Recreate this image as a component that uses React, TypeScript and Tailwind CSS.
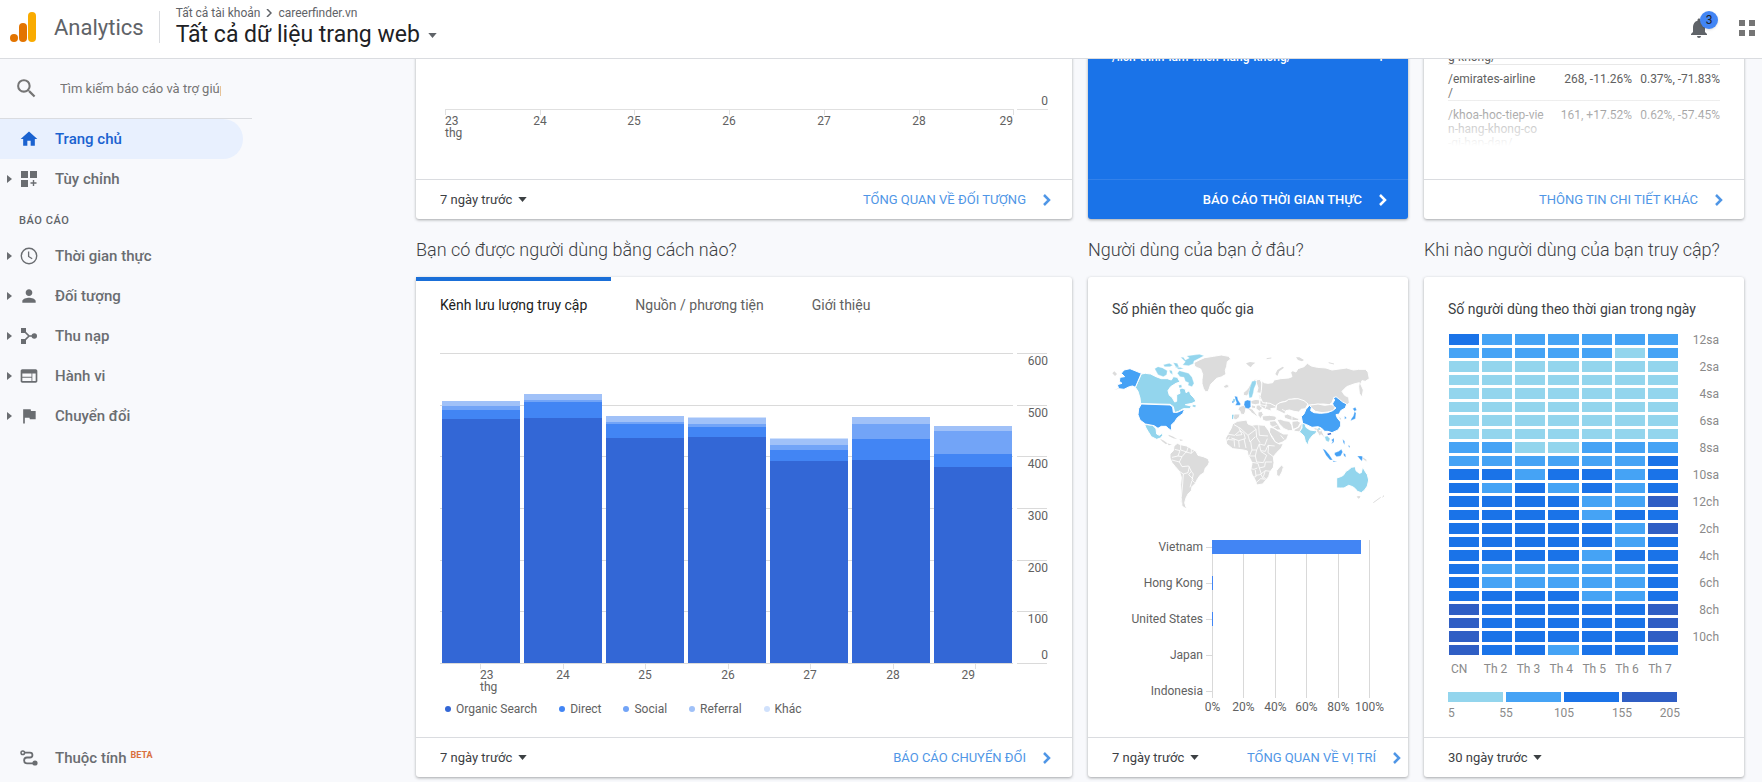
import type { ReactNode } from 'react';
import { MdFlag, MdHome, MdNotifications, MdPerson, MdSearch, MdWeb } from 'react-icons/md';

interface NavItemType {
    label: string;
    icon: ReactNode;
    expandable?: boolean;
    active?: boolean;
    beta?: boolean;
}

interface FooterProps {
    range?: string;
    link?: string;
    inverted?: boolean;
    tight?: boolean;
}

const CustomizeIcon = () => (
    <svg viewBox="0 0 16 16" className="size-4" fill="currentColor">
        <path d="M0 0h7v7H0zM9 0h7v7H9zM0 9h7v7H0zM11.8 9h1.4v2.300h2.300v1.400h-2.300V15h-1.400v-2.300H9.500v-1.400h2.300z" />
    </svg>
);

const ClockIcon = () => (
    <svg viewBox="0 0 18 18" className="size-[18px]" fill="none" stroke="currentColor">
        <circle cx="9" cy="9" r="7.700" strokeWidth="1.400" />
        <path d="M8.600 4.500v5l3.600 2.200" strokeWidth="1.300" />
    </svg>
);

const AcquisitionIcon = () => (
    <svg viewBox="0 0 16 16" className="size-4" fill="currentColor">
        <path d="M0 0h5v5H0zM0 11h5v5H0z" />
        <circle cx="13.300" cy="8" r="2.700" />
        <path d="M2.500 2.500 8 8l-5.500 5.500M8 8h5" fill="none" stroke="currentColor" strokeWidth="1.700" />
    </svg>
);

const AttributionIcon = () => (
    <svg viewBox="0 0 18 16" className="h-4 w-[18px]" fill="none" stroke="currentColor">
        <circle cx="2.800" cy="2.800" r="1.800" strokeWidth="1.500" />
        <path
            d="M4.500 2.600H10a2.400 2.400 0 0 1 0 4.900H7a2.900 2.900 0 0 0 0 5.800h6"
            strokeWidth="1.800"
        />
        <circle cx="15" cy="13" r="2.600" fill="currentColor" stroke="none" />
    </svg>
);

const Caret = () => (
    <svg viewBox="0 0 10 6" className="h-[5px] w-[9px] shrink-0" fill="currentColor">
        <path d="M0 0h10L5 6z" />
    </svg>
);

const reports: NavItemType[] = [
    { label: 'Thời gian thực', icon: <ClockIcon />, expandable: true },
    { label: 'Đối tượng', icon: <MdPerson className="size-5" />, expandable: true },
    { label: 'Thu nạp', icon: <AcquisitionIcon />, expandable: true },
    { label: 'Hành vi', icon: <MdWeb className="size-5" />, expandable: true },
    { label: 'Chuyển đổi', icon: <MdFlag className="size-5" />, expandable: true }
];

const NavItem = ({ label, icon, expandable, active, beta }: NavItemType) => (
    <a
        href="#"
        className={
            active
                ? 'mr-[9px] flex h-10 items-center rounded-r-full bg-[#e8f0fe] pl-[7px] text-[15px] font-medium text-[#1a62d0]'
                : 'mr-[9px] flex h-10 items-center pl-[7px] text-[15px] font-medium text-[#6a6d71]'
        }
    >
        <span className="w-3">
            {expandable && (
                <svg viewBox="0 0 5 8" className="h-2 w-[5px]" fill="currentColor">
                    <path d="M0 0v8l5-4z" />
                </svg>
            )}
        </span>
        <span className="flex w-5 justify-center">{icon}</span>
        <span className="pl-4">
            {label}
            {beta && <sup className="ml-1 text-[9px] font-bold text-[#d9703e]">BETA</sup>}
        </span>
    </a>
);

const CardFooter = ({ range, link, inverted, tight }: FooterProps) => (
    <div
        className={
            inverted
                ? 'flex h-10 items-center justify-between border-t border-[#3381ea] pr-5 pl-6 text-white'
                : tight
                  ? 'flex h-10 items-center justify-between border-t border-[#dadce0] pr-[6px] pl-6'
                  : 'flex h-10 items-center justify-between border-t border-[#dadce0] pr-5 pl-6'
        }
    >
        {range ? (
            <div className="relative flex items-center text-[#3c4043]">
                <select
                    aria-label="Khoảng thời gian"
                    className="appearance-none bg-transparent pr-[14px] text-[13px]"
                >
                    <option>{range}</option>
                </select>
                <span className="pointer-events-none absolute right-0">
                    <Caret />
                </span>
            </div>
        ) : (
            <span />
        )}
        {link && (
            <a
                href="#"
                className={
                    inverted
                        ? 'flex items-center gap-4 text-[13px] font-medium'
                        : 'flex items-center gap-4 text-[13px] text-[#4f96e6]'
                }
            >
                {link}
                <svg
                    viewBox="0 0 10 12"
                    className="h-3 w-[10px]"
                    fill="none"
                    stroke="currentColor"
                    strokeWidth="2.500"
                >
                    <path d="M2 1l5 5-5 5" />
                </svg>
            </a>
        )}
    </div>
);

const days = ['23', '24', '25', '26', '27', '28', '29'];

const DayLabels = ({ start, pitch, top }: { start: number; pitch: number; top: number }) => (
    <g>
        {days.map((day, i) => (
            <g key={day}>
                <path
                    d={`M${start + Math.round(i * pitch) + 0.5} ${top}v5`}
                    stroke="#e0e0e0"
                />
                <text
                    x={start + Math.round(i * pitch)}
                    y={top + 15}
                    textAnchor={i === 0 ? 'start' : i === 6 ? 'end' : 'middle'}
                >
                    {day}
                </text>
            </g>
        ))}
        <text x={start} y={top + 27}>
            thg
        </text>
    </g>
);

const UsersChart = () => (
    <svg viewBox="0 0 608 140" className="w-full fill-[#616161] font-[Roboto] text-[12px]">
        <path d="M5 70.5h569M577 70.5h31" stroke="#e0e0e0" />
        <text x="608" y="66" textAnchor="end">
            0
        </text>
        <DayLabels start={5} pitch={94.7} top={71} />
    </svg>
);

const channels = [
    { label: 'Organic Search', color: '#3367d6', dot: 'bg-[#3367d6]' },
    { label: 'Direct', color: '#4285f4', dot: 'bg-[#4285f4]' },
    { label: 'Social', color: '#72a4f7', dot: 'bg-[#72a4f7]' },
    { label: 'Referral', color: '#a0c1f8', dot: 'bg-[#a0c1f8]' },
    { label: 'Khác', color: '#d0e1fc', dot: 'bg-[#d0e1fc]' }
];

// stacked from the bottom, in chart units
const traffic = [
    [244, 9, 4, 5, 0],
    [245, 16, 2, 6, 0],
    [225, 14, 2, 6, 0],
    [226, 10, 3, 6, 1],
    [202, 11, 5, 6, 1],
    [203, 21, 15, 7, 0],
    [196, 13, 23, 5, 0]
];

const TrafficChart = () => (
    <svg viewBox="0 0 608 346" className="w-full fill-[#616161] font-[Roboto] text-[12px]">
        {[0, 1, 2, 3, 4, 5, 6].map((step) => {
            const y = 310 - Math.round(step * 51.67);
            return (
                <g key={step}>
                    <path d={`M0 ${y + 0.5}h573M577 ${y + 0.5}h30`} stroke="#dadada" />
                    <text x="608" y={step === 0 ? y - 4 : y + 12} textAnchor="end">
                        {step * 100}
                    </text>
                </g>
            );
        })}
        {traffic.map((stack, i) => {
            let top = 310;
            return (
                <g key={i} shapeRendering="crispEdges">
                    {stack.map((value, j) => {
                        top -= value;
                        return (
                            <rect
                                key={j}
                                x={2 + i * 82}
                                y={top}
                                width="78"
                                height={value}
                                fill={channels[j].color}
                            />
                        );
                    })}
                </g>
            );
        })}
        <DayLabels start={40} pitch={82.5} top={311} />
    </svg>
);

const WorldMap = () => (
    <svg viewBox="96 240 816 490" className="w-full" stroke="#fff" strokeWidth="3" strokeLinejoin="round">
        <g fill="#dcdcdc">
            {/* Greenland, Iceland and the northern islands */}
            <path d="M342 278l16-8 16-7 26-4 24-4 22 4 6 8-10 8-2 14-4 12 2 12-14 8-14 4-10 10-8 8-4 12-4 10-8 0-6-10-4-14 0-12 2-16-6-16-10-4-8-4z" />
            <path d="M430 348l10-5 8 4-4 6-10 2z" />
            <path d="M498 280l12-4 16 2-8 6-6 8-8-6zM648 262l10 0 14 8-6 4-12-4zM586 312l6-12 16-10 4 3-14 11-6 14z" stroke="none" />
            <path d="M560 266l14-2M746 278l16 4" stroke="#dcdcdc" />
            <path d="M97 310l6-6 8 8-6 6zM102 360l14-4 10-6" stroke="none" />
            {/* Central America and the Caribbean */}
            <path d="M240 506l12 6 10 8-4 3-12-9zM262 520l14 4-10 2zM266 494l14 6 12 8-12-3-14-7zM298 508l12 2-8 3z" stroke="none" />
            {/* South America */}
            <path d="M282 528L292 520 302 524 320 528 334 536 348 544 354 556 370 560 384 566 388 576 384 586 376 594 372 608 360 616 352 628 346 640 336 650 334 662 324 672 318 684 314 698 320 718 306 708 301 690 303 668 302 644 304 622 298 604 286 590 276 578 270 564 270 552 280 542z" />
            {/* Western and southern Europe */}
            <path d="M478 410l12-4 8 8-2 12-4 8-10-2-2-8-6-6zM462 432l18 0-2 10-10 8-8-4z" />
            <path d="M500 416l10-2 8 4 12 16 4 10-8-8-12-8-4-6zM490 368l12-10 8-14 14-16 10-2-8 10-12 12-6 18-6 12-12-2zM526 330l14-2 8 16 4 18-10 8-12-2 4-14z" />
            <path d="M512 392l16-4 12 2-2 12-12 2-12-2zM514 404l14 4-2 8-12-2zM528 406l14-2 6 10-10 10-10-8zM534 426l12-2 4 10-8 12-8-10zM536 374l12 2 2 14-12-2z" />
            <path d="M540 390l22 4 20 4 10 4-4 12-16 2 4 8-12-4-12-4-12-8z" />
            <path d="M546 438l22-2 16 2 6 6-6 8-26 2-10-4z" />
            {/* Russia */}
            <path d="M546 332L552 338 564 340 578 338 582 330 602 326 626 324 636 320 632 308 638 302 648 306 654 296 672 290 682 280 694 288 712 292 738 294 756 300 800 294 820 300 836 298 856 298 864 306 868 326 856 334 846 332 842 342 850 360 846 382 838 370 836 350 838 338 822 342 800 350 786 364 794 376 806 382 808 398 798 408 776 390 762 382 756 398 748 404 728 402 700 404 686 406 664 392 644 386 624 392 600 398 590 410 570 400 548 398 540 380 544 362z" />
            {/* Central Asia and the Middle East */}
            <path d="M590 404l10-6 18-4 8-6 28-2 18 6 12 10-8 14-12 2-8 8-14-2-14-4-10 2-4 10-12-6-14-6z" />
            <path d="M686 406l14-2 14-2 20 4 14-2 8 0 12 4-8 14-16 4-18 2-20-4z" />
            <path d="M612 436l10-4 14 6 14 6 10 2-8 6-14 0-14-4-10-4zM590 448l12 0 12 4 14 2 8 12 2 16-12 0-14-6-14-14zM636 454l16-2 10 6-8 14-14 8-4-14zM640 478l16-6 8-12 6 2-6 14-4 10-16-2z" />
            <path d="M568 454l18-2 10 14 8 14-12 0-14-8-8-8zM570 472l10 2 16 10 14 8 16 0-6 16-12 8-16 6-6-4-8-16-10-14z" />
            {/* South East Asia and the Pacific */}
            <path d="M700 472l16 4 4 8 4-6 6 14 6 16-6-8-6-6-6 4-6-12-10-10zM776 438l8 6 0 8-6-4zM734 544l6 10M848 560l12 8 2 9-8-5-8-6z" />
            <path d="M880 698l22-16M908 682l6-8M832 680l8 0-4 5z" stroke="#dcdcdc" strokeWidth="3" />
            {/* Africa */}
            <path d="M458 462L472 454 500 450 504 462 514 466 528 464 554 466 566 482 576 502 586 516 598 522 610 520 604 534 590 548 580 560 582 578 580 592 570 606 566 620 558 630 548 642 530 645 526 631 516 613 512 599 516 581 512 569 504 555 502 543 490 540 474 538 458 536 440 522 437 504 446 488 454 474z" />
            <path d="M606 584l4 8-4 14-8 14-8-4 0-14 6-8z" />
        </g>
        {/* country borders */}
        <g fill="none" strokeWidth="2.500">
            <path d="M462 464l14 8 10 22-18 2M440 492l24 4 16-14 12 8M478 472l26 24 24-18-16-16M492 490l4 16-20 6-22-8M504 496l6 20M528 478l2 24 10 16M536 466l2 30 26 2M510 516l16-16M492 506l6 28M476 512l2 20M462 506l2 24M440 508l20 2M512 514l4 26 14 0 8-18 16 4 8-20M538 522l4 20 14 2 8-18 20 2M566 526l-2 22 16 12M516 540l-8 18 18 0 4-18M526 558l4 18 20 2 10-22-18-12M510 576l24 4 4 14 16-4 2-14 20 0M532 594l-10 4-12-2M538 594l6 18M526 600l2 20-10 2M528 616l12-2 16-12 16 2M556 602l-6 18 8 8M542 612l8 14M448 500l-8 14M526 640l16-14 14 2" />
            <path d="M302 524l0 16 18 6 4-14M284 538l16 4-6 16-18 4M294 558l12 2 12-14 16 4 8-8M306 560l-8 16-22-6M298 576l8 14 20-2 8 16 6 8-4 18 8 8M298 604l12 8 14-4 4-18M310 612l-2 30-4 40 2 22M334 604l-8 10 14 14M336 632l-6 20M334 532l0 18" />
            <path d="M606 418l14 8 16-2 8 8 12-4M620 426l-10 12M636 438l0 16M560 396l-4 18M540 404l22 4M576 472l16-6M602 496l10 12" />
        </g>
        <g fill="#93d5ed">
            {/* Canada with its islands */}
            <path d="M184 312L196 310 212 312 228 320 244 326 262 326 274 330 280 320 292 322 300 336 288 340 272 350 264 362 268 376 276 382 284 396 290 394 290 374 300 370 298 358 306 354 316 358 318 368 328 362 332 374 342 384 348 394 336 400 316 404 334 408 330 416 310 416 296 424 284 428 280 410 270 403 182 401 180 384 174 364 166 352z" />
            <path d="M224 296l10-6 14 4 14 8-2 12-10 6-16-6zM250 284l18-4 10 6-8 4-16 0zM280 278l12 2 6 14-10-2zM302 262l8 0 6 8 12-6-8-6 14-2 24-3 14 4-14 8-16 8-2 8-14 6-18-2 8-10zM268 300l8 2 2 12-8-6zM298 302l14 4 14 4 10 12 6 18-6 10-12-4 2-8-10-4-4-12-12-2-8-10zM284 290l16 2 12 4-16 2zM296 346l8-2 2 8-8 2zM338 404l10 2-2 6-8-2z" strokeWidth="1" />
            <path d="M194 464l8 0 16 2 10 10 2 16 8 4 8-6 2 6-6 8-12 4-16-8-10-16-6-10z" />
            <path d="M516 334l12-2 0 10-6 14-2 12-4 14-8 2-2-14 4-18z" strokeWidth="1" />
            <path d="M456 434l5 0-2 14-3-2zM460 386l6 2-2 8-6 0z" stroke="none" />
            {/* India */}
            <path d="M666 462l8-4 4 14 12 8 14 2 6-2-2 10-10 6-8 10-4 8-2 12-8-12-4-16-8-8-6-4 8-12z" />
            {/* Thailand */}
            <path d="M734 500l8-2 8 8-4 10-8-4zM712 478l6-6 4 8" strokeWidth="1" />
            {/* Australia */}
            <path d="M770 624l12-4 8-4 8-12 10-6 6-6 12-2 2 12 10 8 6-2 4-18 6 12 8 12 4 16-4 18-8 12-10 8-12-4-6-8-8-6-12-4-14 8-10 0-12 0z" />
        </g>
        <g fill="#45a1f5">
            {/* United States */}
            <path d="M132 300L150 296 184 310 166 352 158 348 148 350 132 358 116 356 112 344 126 340 118 334 120 322 134 320 124 310z" />
            <path d="M184 402L270 405 278 411 280 427 292 427 314 417 308 431 292 443 284 455 274 465 275 482 266 476 258 469 244 469 234 475 222 467 196 462 180 450 174 434 176 416z" />
            {/* Germany, United Kingdom */}
            <path d="M494 394l8-4 10 2 0 18-6 6-10-2-4-10z" strokeWidth="1" />
            <path d="M464 378l8 2 2 10 8 12-2 4-14 0 4-8-4-10zM457 392l5 2-2 6-4-2z" strokeWidth="1" />
            {/* China */}
            <path d="M664 440l8-8 6-14 10-12 6 6-2 10 10 6 20 2 20-2 16-6 10-8-8-6-2-8 6-10-4-6 8-4 10 8 10 8 12 6-4 12-14 8-4 10-10 2 4 10 10 12 0 12-8 12-18 8-12-4-10 0-10-10-10-4-18 2-16-8-12-4-2-10z" />
            {/* Japan, Korea, Taiwan */}
            <path d="M818 416l8-4 4 8-6 4zM824 424l4 6-2 16-14 6 2-6 6-8zM794 438l6 6-6 4z" strokeWidth="1" />
            {/* Indonesia, Philippines */}
            <path d="M728 536l8 4 12 14 10 16-8 0-12-14zM764 548l12-4 8-6 4 8-6 12-12 2-6-6zM832 558l12 0 4 2-2 14-6-6zM758 572l14 2-12 2zM790 550l6 2 2 10-6-4zM788 508l6 6 0 10-4-6zM804 526l6 2-2 6zM754 510l8-6 0 12-8 6 4-8z" strokeWidth="1" />
        </g>
        <path d="M742 491l10-2 2 4-10 2zM752 496l8 8" fill="#2f5ec4" stroke="none" />
    </svg>
);

const countries = [
    { label: 'Vietnam', width: 149 },
    { label: 'Hong Kong', width: 1 },
    { label: 'United States', width: 1 },
    { label: 'Japan', width: 0 },
    { label: 'Indonesia', width: 0 }
];

const CountryChart = () => (
    <svg viewBox="0 0 272 178" className="w-full fill-[#616161] font-[Roboto] text-[12px]">
        {[0, 20, 40, 60, 80, 100].map((percent) => (
            <g key={percent}>
                <path
                    d={`M${100.5 + Math.round(percent * 1.57)} 0v158`}
                    stroke="#d9d9d9"
                />
                <text x={100.5 + Math.round(percent * 1.57)} y="171" textAnchor="middle">
                    {percent}%
                </text>
            </g>
        ))}
        {countries.map(({ label, width }, i) => (
            <g key={label}>
                <path d={`M94 ${7.5 + i * 36}h6`} stroke="#d9d9d9" />
                <rect x="100" y={i * 36} width={width} height="14" fill="#4285f4" />
                <text x="91" y={11 + i * 36} textAnchor="end">
                    {label}
                </text>
            </g>
        ))}
    </svg>
);

const levels = ['bg-[#93d5ed]', 'bg-[#45a3f5]', 'bg-[#1a73e8]', 'bg-[#2f5ec4]'];

// one row for each hour, one digit for each day of the week
const hours = [
    '2111111',
    '1111101',
    '0000000',
    '0000000',
    '0000000',
    '0000000',
    '0000000',
    '0000000',
    '1100111',
    '1111112',
    '2212212',
    '2121212',
    '2222113',
    '2222122',
    '2222213',
    '2222212',
    '2222122',
    '2111112',
    '2111112',
    '2222112',
    '3222223',
    '3222223',
    '3222223',
    '3221222'
];

const hourLabels = [
    '12sa', '2sa', '4sa', '6sa', '8sa', '10sa',
    '12ch', '2ch', '4ch', '6ch', '8ch', '10ch'
];

const HeatMap = () => (
    <div className="text-xs text-[#8a8a8a]">
        <div className="flex justify-between">
            <div className="flex w-[230px] flex-col gap-[3px] pl-px">
                {hours.map((row, i) => (
                    <div key={i} className="grid grid-cols-7 gap-[3px]">
                        {row.split('').map((level, j) => (
                            <div
                                key={j}
                                className={`${i % 2 === 0 ? 'h-[11px]' : 'h-[10px]'} ${levels[Number(level)]}`}
                            />
                        ))}
                    </div>
                ))}
            </div>
            <ul className="h-[320px] text-right">
                {hourLabels.map((label) => (
                    <li key={label} className="h-[27px] leading-3">
                        {label}
                    </li>
                ))}
            </ul>
        </div>
        <div className="mt-[6px] grid w-[233px] grid-cols-7 pl-[3px]">
            {['CN', 'Th 2', 'Th 3', 'Th 4', 'Th 5', 'Th 6', 'Th 7'].map((day) => (
                <span key={day}>{day}</span>
            ))}
        </div>
        <div className="mt-[15px] grid w-[229px] grid-cols-4 gap-[3px]">
            {levels.map((level) => (
                <div key={level} className={`h-[10px] ${level}`} />
            ))}
        </div>
        <div className="mt-[3px] flex w-[232px]">
            <span className="w-[29px]">5</span>
            <span className="w-[58px] text-center">55</span>
            <span className="w-[58px] text-center">105</span>
            <span className="w-[58px] text-center">155</span>
            <span className="flex-1 text-right">205</span>
        </div>
    </div>
);

const pages = [
    { path: '/khoa-hoc-tiep-vien-hang-khong/', lines: ['g-khong/'], views: '', rate: '' },
    { path: '/emirates-airline/', lines: ['/emirates-airline', '/'], views: '268, -11.26%', rate: '0.37%, -71.83%' },
    {
        path: '/khoa-hoc-tiep-vien-hang-khong-co-gi/',
        lines: ['/khoa-hoc-tiep-vie', 'n-hang-khong-co', '-gi-hap-dan/'],
        views: '161, +17.52%',
        rate: '0.62%, -57.45%'
    }
];

const card = 'flex flex-col rounded-[3px] bg-white shadow-[0_1px_3px_rgba(60,64,67,0.45)]';

const SectionTitle = ({ children, wide }: { children: ReactNode; wide?: boolean }) => (
    <h2
        className={
            wide
                ? 'col-span-2 flex h-[58px] items-center pt-1 text-lg font-light whitespace-nowrap text-[#3c4043]'
                : 'flex h-[58px] items-center pt-1 text-lg font-light whitespace-nowrap text-[#3c4043]'
        }
    >
        {children}
    </h2>
);

const Header = () => (
    <header className="z-10 flex h-[59px] shrink-0 items-start border-b border-[#dadce0] bg-white">
        <svg viewBox="0 0 26 30" className="mt-3 ml-[10px] h-[30px] w-[26px]">
            <rect x="18" width="8" height="30" rx="4" fill="#f9ab00" />
            <rect x="9" y="11" width="8" height="19" rx="4" fill="#e37400" />
            <circle cx="4" cy="26" r="4" fill="#e37400" />
        </svg>
        <span className="mt-3 ml-[18px] text-[22px] leading-8 text-[#5f6368]">Analytics</span>
        <div className="mt-[11px] ml-[15px] h-8 w-px bg-[#dadce0]" />
        <div className="ml-4">
            <nav className="mt-1 flex items-center gap-[6px] text-xs leading-[18px] text-[#5f6368]">
                <a href="#">Tất cả tài khoản</a>
                <svg viewBox="0 0 6 8" className="h-2 w-[6px]" fill="none" stroke="currentColor" strokeWidth="1.500">
                    <path d="M1 0l4 4-4 4" />
                </svg>
                <a href="#">careerfinder.vn</a>
            </nav>
            <button type="button" className="flex items-center gap-2 text-[23px] leading-[26px] text-[#202124]">
                Tất cả dữ liệu trang web
                <span className="text-[#5f6368]">
                    <Caret />
                </span>
            </button>
        </div>
        <div className="mt-4 mr-[7px] ml-auto flex items-center gap-7">
            <button type="button" aria-label="Thông báo" className="relative text-[#5f6368]">
                <MdNotifications className="size-6" />
                <span className="absolute -top-[5px] -right-[7px] flex size-[18px] items-center justify-center rounded-full bg-[#4285f4] text-xs text-[#202124] shadow">
                    3
                </span>
            </button>
            <button type="button" aria-label="Ứng dụng" className="text-[#757575]">
                <svg viewBox="0 0 16 16" className="size-4" fill="currentColor">
                    <path d="M0 0h6v6H0zM10 0h6v6h-6zM0 10h6v6H0zM10 10h6v6h-6z" />
                </svg>
            </button>
        </div>
    </header>
);

const Sidebar = () => (
    <aside className="flex w-[252px] shrink-0 flex-col">
        <label className="flex h-[60px] shrink-0 items-center border-b border-[#dadce0] pl-[14px] text-[#757575]">
            <MdSearch className="size-[25px]" />
            <input
                type="text"
                placeholder="Tìm kiếm báo cáo và trợ giúp"
                className="ml-[21px] w-[161px] bg-transparent text-[13px] outline-none placeholder:text-[#757575]"
            />
        </label>
        <nav className="flex flex-1 flex-col">
            <NavItem label="Trang chủ" icon={<MdHome className="size-5" />} active />
            <NavItem label="Tùy chỉnh" icon={<CustomizeIcon />} expandable />
            <h3 className="flex h-[37px] items-center pt-2 pl-[19px] text-[11px] font-medium tracking-wider text-[#5f6368]">
                BÁO CÁO
            </h3>
            {reports.map((item) => (
                <NavItem key={item.label} {...item} />
            ))}
            <div className="mt-auto mb-1">
                <NavItem label="Thuộc tính" icon={<AttributionIcon />} beta />
            </div>
        </nav>
    </aside>
);

const App = () => {
    return (
        <div className="flex h-screen flex-col overflow-hidden bg-[#f8f9fc] font-[Roboto,sans-serif] text-[#3c4043]">
            <Header />
            <div className="flex min-h-0 flex-1">
                <Sidebar />
                <main className="min-w-0 flex-1 overflow-hidden pr-[18px] pl-[164px]">
                    <div className="-mt-5 grid grid-cols-4 gap-x-4">
                        <section className={`${card} col-span-2`}>
                            <div className="h-[140px] px-6">
                                <UsersChart />
                            </div>
                            <CardFooter range="7 ngày trước" link="TỔNG QUAN VỀ ĐỐI TƯỢNG" />
                        </section>
                        <section className="flex flex-col rounded-[3px] bg-[#1a73e8] shadow-[0_1px_3px_rgba(60,64,67,0.45)]">
                            <div className="flex h-[140px] justify-between px-6 pt-[11px] text-xs leading-[14px] font-medium text-white">
                                <span>/lich-trinh-lam-...ien-hang-khong/</span>
                                <span>1</span>
                            </div>
                            <CardFooter link="BÁO CÁO THỜI GIAN THỰC" inverted />
                        </section>
                        <section className={card}>
                            <div className="relative h-[140px] overflow-hidden px-6 pt-[11px]">
                                <table className="w-full text-xs leading-[14px] text-[#616161]">
                                    <tbody>
                                        {pages.map(({ path, lines, views, rate }) => (
                                            <tr key={path} className="border-b border-[#e8e8e8] align-top last:border-b-0">
                                                <td className={lines.length > 1 ? 'pt-[7px]' : ''}>
                                                    {lines.map((line) => (
                                                        <div key={line}>{line}</div>
                                                    ))}
                                                </td>
                                                <td className={lines.length > 1 ? 'pt-[7px] text-right' : ''}>{views}</td>
                                                <td className={lines.length > 1 ? 'pt-[7px] text-right' : ''}>{rate}</td>
                                            </tr>
                                        ))}
                                    </tbody>
                                </table>
                                <div className="absolute inset-x-0 bottom-0 h-[94px] bg-linear-to-b from-white/0 to-white to-65%" />
                            </div>
                            <CardFooter link="THÔNG TIN CHI TIẾT KHÁC" />
                        </section>

                        <SectionTitle wide>Bạn có được người dùng bằng cách nào?</SectionTitle>
                        <SectionTitle>Người dùng của bạn ở đâu?</SectionTitle>
                        <SectionTitle>Khi nào người dùng của bạn truy cập?</SectionTitle>

                        <section className={`${card} col-span-2`}>
                            <div className="flex text-sm text-[#616161]">
                                <button type="button" className="h-[52px] border-t-4 border-[#1a6fd8] px-6 text-[#212121]">
                                    Kênh lưu lượng truy cập
                                </button>
                                <button type="button" className="h-[52px] border-t-4 border-transparent px-6">
                                    Nguồn / phương tiện
                                </button>
                                <button type="button" className="h-[52px] border-t-4 border-transparent px-6">
                                    Giới thiệu
                                </button>
                            </div>
                            <div className="flex-1 px-6 pt-6">
                                <TrafficChart />
                                <ul className="mt-[2px] flex gap-[22px] pl-[5px] text-xs text-[#616161]">
                                    {channels.map(({ label, dot }) => (
                                        <li key={label} className="flex items-center gap-[5px]">
                                            <span className={`size-[6px] rounded-full ${dot}`} />
                                            {label}
                                        </li>
                                    ))}
                                </ul>
                            </div>
                            <CardFooter range="7 ngày trước" link="BÁO CÁO CHUYỂN ĐỔI" />
                        </section>
                        <section className={card}>
                            <div className="h-[460px] px-6 pt-[22px]">
                                <h3 className="text-sm">Số phiên theo quốc gia</h3>
                                <div className="mt-[31px]">
                                    <WorldMap />
                                </div>
                                <div className="mt-[27px]">
                                    <CountryChart />
                                </div>
                            </div>
                            <CardFooter range="7 ngày trước" link="TỔNG QUAN VỀ VỊ TRÍ" tight />
                        </section>
                        <section className={card}>
                            <div className="h-[460px] pt-[22px] pr-[25px] pl-6">
                                <h3 className="mb-[15px] text-sm">Số người dùng theo thời gian trong ngày</h3>
                                <HeatMap />
                            </div>
                            <CardFooter range="30 ngày trước" />
                        </section>
                    </div>
                </main>
            </div>
        </div>
    );
};

export default App;
